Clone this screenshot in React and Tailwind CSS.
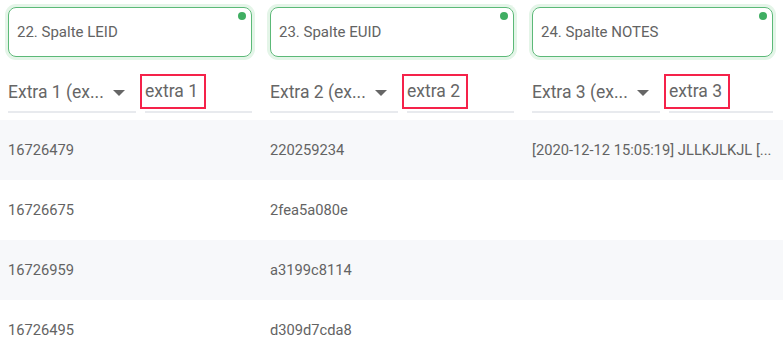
import React from "react";

const columns = [
  { card: "22. Spalte LEID", select: "Extra 1 (ex...", input: "extra 1" },
  { card: "23. Spalte EUID", select: "Extra 2 (ex...", input: "extra 2" },
  { card: "24. Spalte NOTES", select: "Extra 3 (ex...", input: "extra 3" },
];

const rows = [
  ["16726479", "220259234", "[2020-12-12 15:05:19] JLLKJLKJL [..."],
  ["16726675", "2fea5a080e", ""],
  ["16726959", "a3199c8114", ""],
  ["16726495", "d309d7cda8", ""],
];

function HeaderColumn({ col }) {
  return (
    <div className="pl-2 pr-[10px] pt-[7px]">
      <div className="relative h-[50px] rounded-lg border border-[#5cb978] shadow-[0_0_0_3px_#e4f5e8] flex items-center px-[8px] text-[15px] text-[#636363]">
        {col.card}
        <span className="absolute top-[4px] right-[5px] w-2 h-2 rounded-full bg-[#3fae62]" />
      </div>
      <div className="mt-[17px] flex gap-[9px]">
        <div className="w-[128px] h-[39px] border-b-2 border-[#e8eaee] flex items-center justify-between pr-[11px] text-[17.5px] text-[#666]">
          <span className="whitespace-nowrap">{col.select}</span>
          <svg width="12" height="6" viewBox="0 0 12 6" className="mt-[1px]">
            <path d="M0 0h12L6 6z" fill="#666" />
          </svg>
        </div>
        <div className="flex-1 h-[39px] border-b-2 border-[#e8eaee] flex items-start">
          <span className="-ml-[5px] h-[35px] flex items-center border-2 border-[#f5224a] pl-[3px] pr-[6px] text-[17.5px] text-[#666] whitespace-nowrap">
            {col.input}
          </span>
        </div>
      </div>
    </div>
  );
}

export default function App() {
  return (
    <div className="w-[783px] h-[357px] overflow-hidden bg-white font-['Roboto','Liberation_Sans',sans-serif]">
      <div className="grid grid-cols-[262px_262px_1fr]">
        {columns.map((col) => (
          <HeaderColumn key={col.card} col={col} />
        ))}
      </div>
      <div className="mt-[7px]">
        {rows.map((row, i) => (
          <div
            key={row[0]}
            className={`grid grid-cols-[262px_262px_1fr] h-[60px] items-center text-[14.7px] text-[#636363] ${i % 2 === 0 ? "bg-[#f7f8fa]" : "bg-white"}`}
          >
            {row.map((cell, j) => (
              <div key={j} className="pl-2 whitespace-nowrap overflow-hidden">
                {cell}
              </div>
            ))}
          </div>
        ))}
      </div>
    </div>
  );
}
